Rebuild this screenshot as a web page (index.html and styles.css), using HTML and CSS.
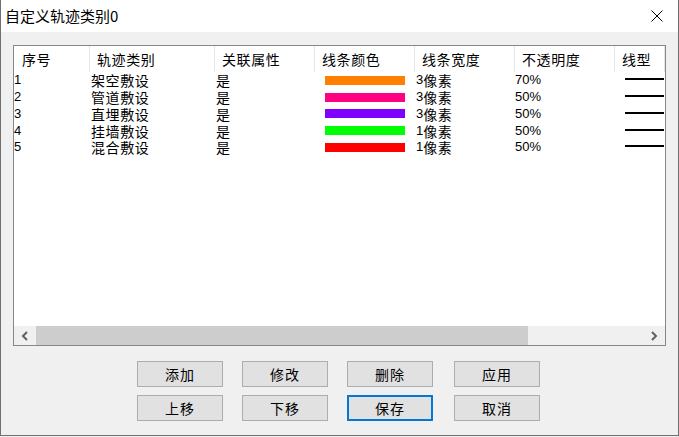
FILE: index.html
```html
<!DOCTYPE html>
<html lang="zh-CN">
<head>
	<meta charset="UTF-8">
	<title>自定义轨迹类别0</title>
	<link rel="stylesheet" href="styles.css">
</head>

<body>
	<div class="dialog">
		<div class="titlebar">
			<span class="title">自定义轨迹类别0</span>
			<span class="close">
				<svg width="12" height="12" viewBox="0 0 12 12"><path d="M0.5 0.5 L11.5 11.5 M11.5 0.5 L0.5 11.5" stroke="#000" stroke-width="1" fill="none"/></svg>
			</span>
		</div>
		<div class="content">
			<div class="list">
				<div class="header">
					<div class="hcell first">序号</div>
					<div class="hcell">轨迹类别</div>
					<div class="hcell">关联属性</div>
					<div class="hcell">线条颜色</div>
					<div class="hcell">线条宽度</div>
					<div class="hcell">不透明度</div>
					<div class="hcell">线型</div>
				</div>
				<div class="rows">
					<div class="row">
						<div class="cell num">1</div>
						<div class="cell">架空敷设</div>
						<div class="cell">是</div>
						<div class="cell"><span class="bar orange"></span></div>
						<div class="cell"><span class="num">3</span>像素</div>
						<div class="cell num">70%</div>
						<div class="cell"><span class="line"></span></div>
					</div>
					<div class="row">
						<div class="cell num">2</div>
						<div class="cell">管道敷设</div>
						<div class="cell">是</div>
						<div class="cell"><span class="bar pink"></span></div>
						<div class="cell"><span class="num">3</span>像素</div>
						<div class="cell num">50%</div>
						<div class="cell"><span class="line"></span></div>
					</div>
					<div class="row">
						<div class="cell num">3</div>
						<div class="cell">直埋敷设</div>
						<div class="cell">是</div>
						<div class="cell"><span class="bar purple"></span></div>
						<div class="cell"><span class="num">3</span>像素</div>
						<div class="cell num">50%</div>
						<div class="cell"><span class="line"></span></div>
					</div>
					<div class="row">
						<div class="cell num">4</div>
						<div class="cell">挂墙敷设</div>
						<div class="cell">是</div>
						<div class="cell"><span class="bar green"></span></div>
						<div class="cell"><span class="num">1</span>像素</div>
						<div class="cell num">50%</div>
						<div class="cell"><span class="line"></span></div>
					</div>
					<div class="row">
						<div class="cell num">5</div>
						<div class="cell">混合敷设</div>
						<div class="cell">是</div>
						<div class="cell"><span class="bar red"></span></div>
						<div class="cell"><span class="num">1</span>像素</div>
						<div class="cell num">50%</div>
						<div class="cell"><span class="line"></span></div>
					</div>
				</div>
				<div class="hscroll">
					<span class="arrow">
						<svg width="8" height="10" viewBox="0 0 8 10"><path d="M6 1 L2 5 L6 9" stroke="#606060" stroke-width="2" fill="none"/></svg>
					</span>
					<div class="track"><span class="thumb"></span></div>
					<span class="arrow">
						<svg width="8" height="10" viewBox="0 0 8 10"><path d="M2 1 L6 5 L2 9" stroke="#606060" stroke-width="2" fill="none"/></svg>
					</span>
				</div>
			</div>
			<div class="buttons">
				<div class="btnrow">
					<a class="btn">添加</a>
					<a class="btn">修改</a>
					<a class="btn">删除</a>
					<a class="btn last">应用</a>
				</div>
				<div class="btnrow">
					<a class="btn">上移</a>
					<a class="btn">下移</a>
					<a class="btn focus">保存</a>
					<a class="btn last">取消</a>
				</div>
			</div>
		</div>
	</div>
</body>

</html>
```

FILE: styles.css
```css
		*{
			margin: 0px;
			padding: 0px;
			box-sizing: border-box;
		}
		html,body{
			background-color: #f0f0f0;
		}
		body{
			width: 679px;
			height: 437px;
			overflow: hidden;
			font-family: "Noto Sans CJK SC", "Liberation Sans", sans-serif;
			color: #000;
		}
		.dialog{
			width: 679px;
			height: 436px;
			border: 1px solid #707070;
			border-top: none;
			background-color: #f0f0f0;
		}
		.titlebar{
			height: 32px;
			background-color: #fff;
			display: flex;
			align-items: center;
			justify-content: space-between;
			padding-left: 4px;
			padding-right: 15px;
		}
		.title{
			font-size: 15px;
			line-height: 20px;
		}
		.close svg{
			display: block;
		}
		.content{
			padding: 13px 0 0 12px;
		}
		.list{
			width: 653px;
			height: 301px;
			border: 1px solid #828790;
			background-color: #fff;
			display: flex;
			flex-direction: column;
			overflow: hidden;
		}
		.header,.row{
			display: grid;
			grid-template-columns: 76px 125px 100px 100px 100px 100px 1fr;
		}
		.header{
			height: 26px;
		}
		.hcell{
			font-size: 14px;
			line-height: 26px;
			padding-left: 7px;
			border-right: 1px solid #e5e5e5;
			white-space: nowrap;
			letter-spacing: 0.6px;
		}
		.hcell.first{
			padding-left: 8px;
		}
		.rows{
			flex: 1;
		}
		.row{
			height: 16.75px;
		}
		.cell{
			font-size: 14px;
			line-height: 16px;
			padding-left: 1px;
			display: flex;
			align-items: center;
			white-space: nowrap;
			letter-spacing: 0.6px;
		}
		.num{
			font-family: "Liberation Sans", sans-serif;
			font-size: 13px;
			letter-spacing: 0;
		}
		.cell.num{
			padding-left: 0px;
		}
		.bar{
			display: block;
			width: 80px;
			height: 9px;
			margin-left: 9px;
		}
		.orange{ background-color: #ff8000; }
		.pink{ background-color: #ff0080; }
		.purple{ background-color: #8000ff; }
		.green{ background-color: #00ff00; }
		.red{ background-color: #ff0000; }
		.line{
			display: block;
			width: 39px;
			height: 2px;
			margin-left: 9px;
			margin-bottom: 2px;
			background-color: #000;
		}
		.hscroll{
			height: 19px;
			display: flex;
			background-color: #f0f0f0;
		}
		.arrow{
			width: 22px;
			display: flex;
			align-items: center;
			justify-content: center;
		}
		.track{
			flex: 1;
		}
		.thumb{
			display: block;
			width: 492px;
			height: 19px;
			background-color: #cdcdcd;
		}
		.buttons{
			padding-left: 124px;
			margin-top: 15px;
		}
		.btnrow{
			display: flex;
			gap: 19px;
			margin-bottom: 8px;
		}
		.btn{
			width: 86px;
			height: 26px;
			border: 1px solid #adadad;
			background-color: #e1e1e1;
			font-size: 14px;
			line-height: 24px;
			text-align: center;
			letter-spacing: 1px;
			cursor: pointer;
		}
		.btn.last{
			margin-left: 2px;
		}
		.btn.focus{
			border: 2px solid #0078d7;
			line-height: 22px;
		}
```
